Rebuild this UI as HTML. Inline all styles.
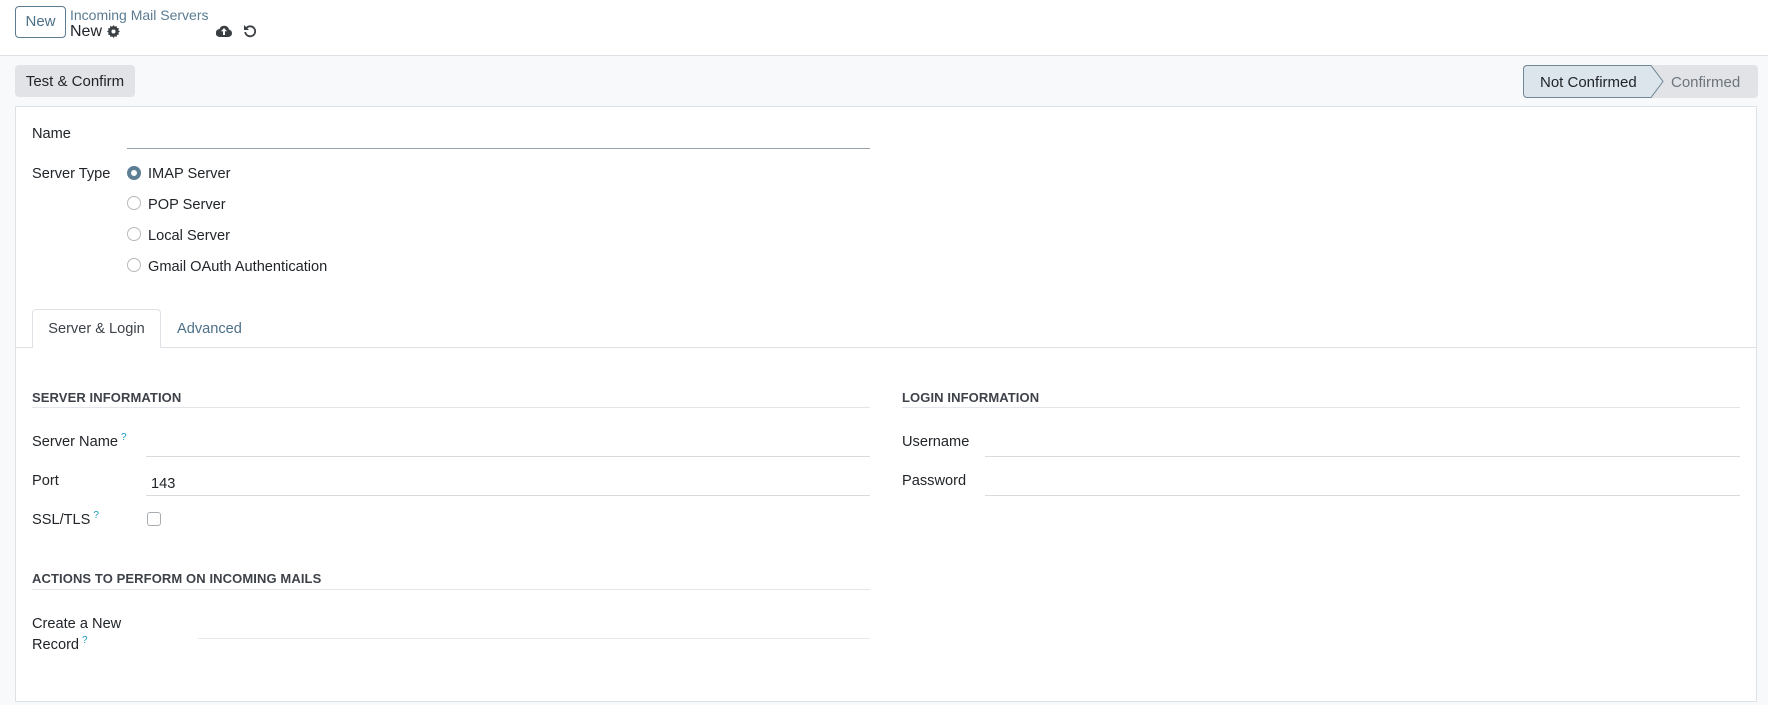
<!DOCTYPE html>
<html><head><meta charset="utf-8"><style>
*{box-sizing:border-box;margin:0;padding:0}
body{width:1768px;height:705px;background:#f8f9fa;font-family:"Liberation Sans",sans-serif;color:#212529;font-size:14.6px;position:relative;overflow:hidden}
.a{position:absolute;white-space:nowrap}
.hdr{position:absolute;left:0;top:0;width:1768px;height:56px;background:#fff;border-bottom:1px solid #dee2e6}
.line{position:absolute;height:1px;background:#d8dadd}
.radio{position:absolute;width:14px;height:14px;border:1px solid #b5b9bd;border-radius:50%;background:#fff}
.sec{font-weight:bold;font-size:13px;color:#3d4249;letter-spacing:.1px}
.q{color:#1a97c2;font-size:10px;position:relative;top:-6px;margin-left:3px}
</style></head><body>
<div class="hdr"></div>
<div class="a" style="left:15px;top:6px;width:51px;height:32px;border:1px solid #5b7c92;border-radius:4px;color:#4d7089;font-size:15px;line-height:30px;text-align:center">New</div>
<div class="a" style="left:70px;top:7px;color:#5b7c92;font-size:14px">Incoming Mail Servers</div>
<div class="a" style="left:70px;top:23px;font-size:16px">New</div>
<svg class="a" style="left:107px;top:25px" width="13" height="13" viewBox="0 0 16 16"><path fill="#3a3f44" d="M8 0l1.5 2 2.4-.8.3 2.5 2.5.3-.8 2.4 2 1.6-2 1.5.8 2.4-2.5.3-.3 2.5-2.4-.8L8 16l-1.5-2-2.4.8-.3-2.5-2.5-.3.8-2.4L0 8l2-1.5-.8-2.4 2.5-.3.3-2.5 2.4.8z"/><circle cx="8" cy="8" r="2.5" fill="#fff"/></svg>
<svg class="a" style="left:216px;top:24px" width="16" height="14" viewBox="0 0 16 14"><path fill="#3a3f44" d="M4 13a4 4 0 0 1-.5-8A5 5 0 0 1 13 5.5 3.8 3.8 0 0 1 12.5 13z"/><path fill="#fff" d="M8 4l3 3.2H9V11H7V7.2H5z"/></svg>
<svg class="a" style="left:243px;top:24px" width="14" height="14" viewBox="0 0 14 14"><path fill="none" stroke="#3a3f44" stroke-width="1.8" d="M3 4.5A5 5 0 1 1 2.2 8"/><path fill="#3a3f44" d="M1 1v5h5z"/></svg>

<div class="a" style="left:15px;top:65px;width:120px;height:32px;background:#e1e3e6;border-radius:4px;line-height:33px;text-align:center;font-size:15px">Test &amp; Confirm</div>

<svg class="a" style="left:1523px;top:65px" width="235" height="33" viewBox="0 0 235 33"><rect x="0" y="0" width="235" height="33" rx="4" fill="#e1e3e6"/><path d="M4 .5H128L140 16.5 128 32.5H4A3.5 3.5 0 0 1 .5 29V4A3.5 3.5 0 0 1 4 .5Z" fill="#dce5eb" stroke="#6f8797"/></svg>
<div class="a" style="left:1540px;top:74px;font-size:15px;color:#212529">Not Confirmed</div>
<div class="a" style="left:1671px;top:74px;font-size:15px;color:#6c757d">Confirmed</div>

<div class="a" style="left:15px;top:106px;width:1742px;height:596px;background:#fff;border:1px solid #dee2e6"></div>

<div class="a" style="left:32px;top:126px">Name</div>
<div class="line" style="left:127px;top:148px;width:743px;background:#9aa2a9"></div>
<div class="a" style="left:32px;top:166px">Server Type</div>
<div class="radio" style="left:127px;top:166px;border:4px solid #5d7e93"></div>
<div class="a" style="left:148px;top:166px">IMAP Server</div>
<div class="radio" style="left:127px;top:196px"></div>
<div class="a" style="left:148px;top:197px">POP Server</div>
<div class="radio" style="left:127px;top:227px"></div>
<div class="a" style="left:148px;top:228px">Local Server</div>
<div class="radio" style="left:127px;top:258px"></div>
<div class="a" style="left:148px;top:259px">Gmail OAuth Authentication</div>

<div class="line" style="left:16px;top:347px;width:1740px;background:#dee2e6"></div>
<div class="a" style="left:32px;top:309px;width:129px;height:39px;background:#fff;border:1px solid #dee2e6;border-bottom:none;border-radius:4px 4px 0 0;text-align:center;line-height:39px;color:#3d4249">Server &amp; Login</div>
<div class="a" style="left:177px;top:321px;color:#4d7089">Advanced</div>

<div class="a sec" style="left:32px;top:390px">SERVER INFORMATION</div>
<div class="line" style="left:32px;top:407px;width:838px;background:#e3e5e8"></div>
<div class="a sec" style="left:902px;top:390px">LOGIN INFORMATION</div>
<div class="line" style="left:902px;top:407px;width:838px;background:#e3e5e8"></div>

<div class="a" style="left:32px;top:434px">Server Name<span class="q">?</span></div>
<div class="line" style="left:146px;top:456px;width:724px"></div>
<div class="a" style="left:32px;top:473px">Port</div>
<div class="a" style="left:151px;top:476px">143</div>
<div class="line" style="left:146px;top:495px;width:724px"></div>
<div class="a" style="left:32px;top:512px">SSL/TLS<span class="q">?</span></div>
<div class="a" style="left:147px;top:512px;width:14px;height:14px;border:1px solid #a8adb2;border-radius:3px;background:#fff"></div>

<div class="a" style="left:902px;top:434px">Username</div>
<div class="line" style="left:985px;top:456px;width:755px"></div>
<div class="a" style="left:902px;top:473px">Password</div>
<div class="line" style="left:985px;top:495px;width:755px"></div>

<div class="a sec" style="left:32px;top:571px">ACTIONS TO PERFORM ON INCOMING MAILS</div>
<div class="line" style="left:32px;top:589px;width:838px;background:#e3e5e8"></div>
<div class="a" style="left:32px;top:616px">Create a New</div>
<div class="a" style="left:32px;top:637px">Record<span class="q">?</span></div>
<div class="line" style="left:198px;top:638px;width:672px;background:#e6e8ea"></div>
</body></html>
